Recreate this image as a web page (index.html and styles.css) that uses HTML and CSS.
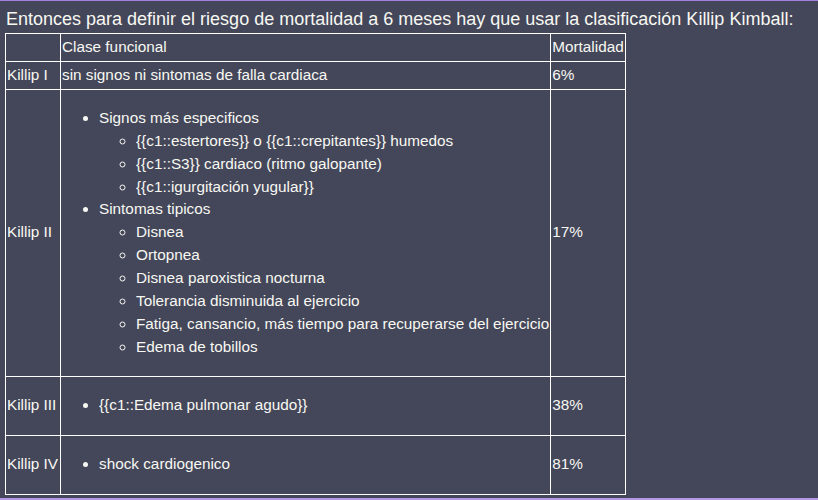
FILE: index.html
```html
<!DOCTYPE html>
<html lang="es">
<head>
<meta charset="utf-8">
<link rel="stylesheet" href="styles.css">
</head>
<body>
<div class="card">
  <div class="intro">Entonces para definir el riesgo de mortalidad a 6 meses hay que usar la clasificación Killip Kimball:</div>
  <table class="killip">
    <tr><td></td><td>Clase funcional</td><td>Mortalidad</td></tr>
    <tr><td>Killip I</td><td>sin signos ni sintomas de falla cardiaca</td><td>6%</td></tr>
    <tr><td>Killip II</td><td>
      <ul>
        <li>Signos más especificos
          <ul>
            <li>{{c1::estertores}} o {{c1::crepitantes}} humedos</li>
            <li>{{c1::S3}} cardiaco (ritmo galopante)</li>
            <li>{{c1::igurgitación yugular}}</li>
          </ul>
        </li>
        <li>Sintomas tipicos
          <ul>
            <li>Disnea</li>
            <li>Ortopnea</li>
            <li>Disnea paroxistica nocturna</li>
            <li>Tolerancia disminuida al ejercicio</li>
            <li>Fatiga, cansancio, más tiempo para recuperarse del ejercicio</li>
            <li>Edema de tobillos</li>
          </ul>
        </li>
      </ul>
    </td><td>17%</td></tr>
    <tr><td>Killip III</td><td><ul class="single"><li>{{c1::Edema pulmonar agudo}}</li></ul></td><td>38%</td></tr>
    <tr><td>Killip IV</td><td><ul class="single"><li>shock cardiogenico</li></ul></td><td>81%</td></tr>
  </table>
</div>
</body>
</html>
```
FILE: styles.css
```css
html, body {
  margin: 0;
  padding: 0;
  background: #44475a;
}
.card {
  box-sizing: border-box;
  width: 818px;
  height: 500px;
  border-top: 1px solid #a57ee0;
  border-bottom: 2px solid #b49ae6;
  padding: 5px 5px 0 5px;
  color: #f8f8f2;
  font-family: "Liberation Sans", Arial, sans-serif;
}
.intro {
  font-size: 18px;
  line-height: 27px;
  padding-left: 1px;
}
.killip {
  border-collapse: collapse;
  font-size: 15.3px;
  line-height: 22.9px;
}
.killip td {
  border: 1px solid #ffffff;
  padding: 2px 1px;
  vertical-align: middle;
  text-align: left;
}
.killip td:first-child {
  padding-right: 2px;
}
.killip ul {
  margin: 15px 0;
  padding-left: 37px;
  list-style: disc;
}
.killip ul.single {
  margin: 15.5px 0;
}
.killip ul ul {
  margin: 0;
  list-style: circle;
}
```
